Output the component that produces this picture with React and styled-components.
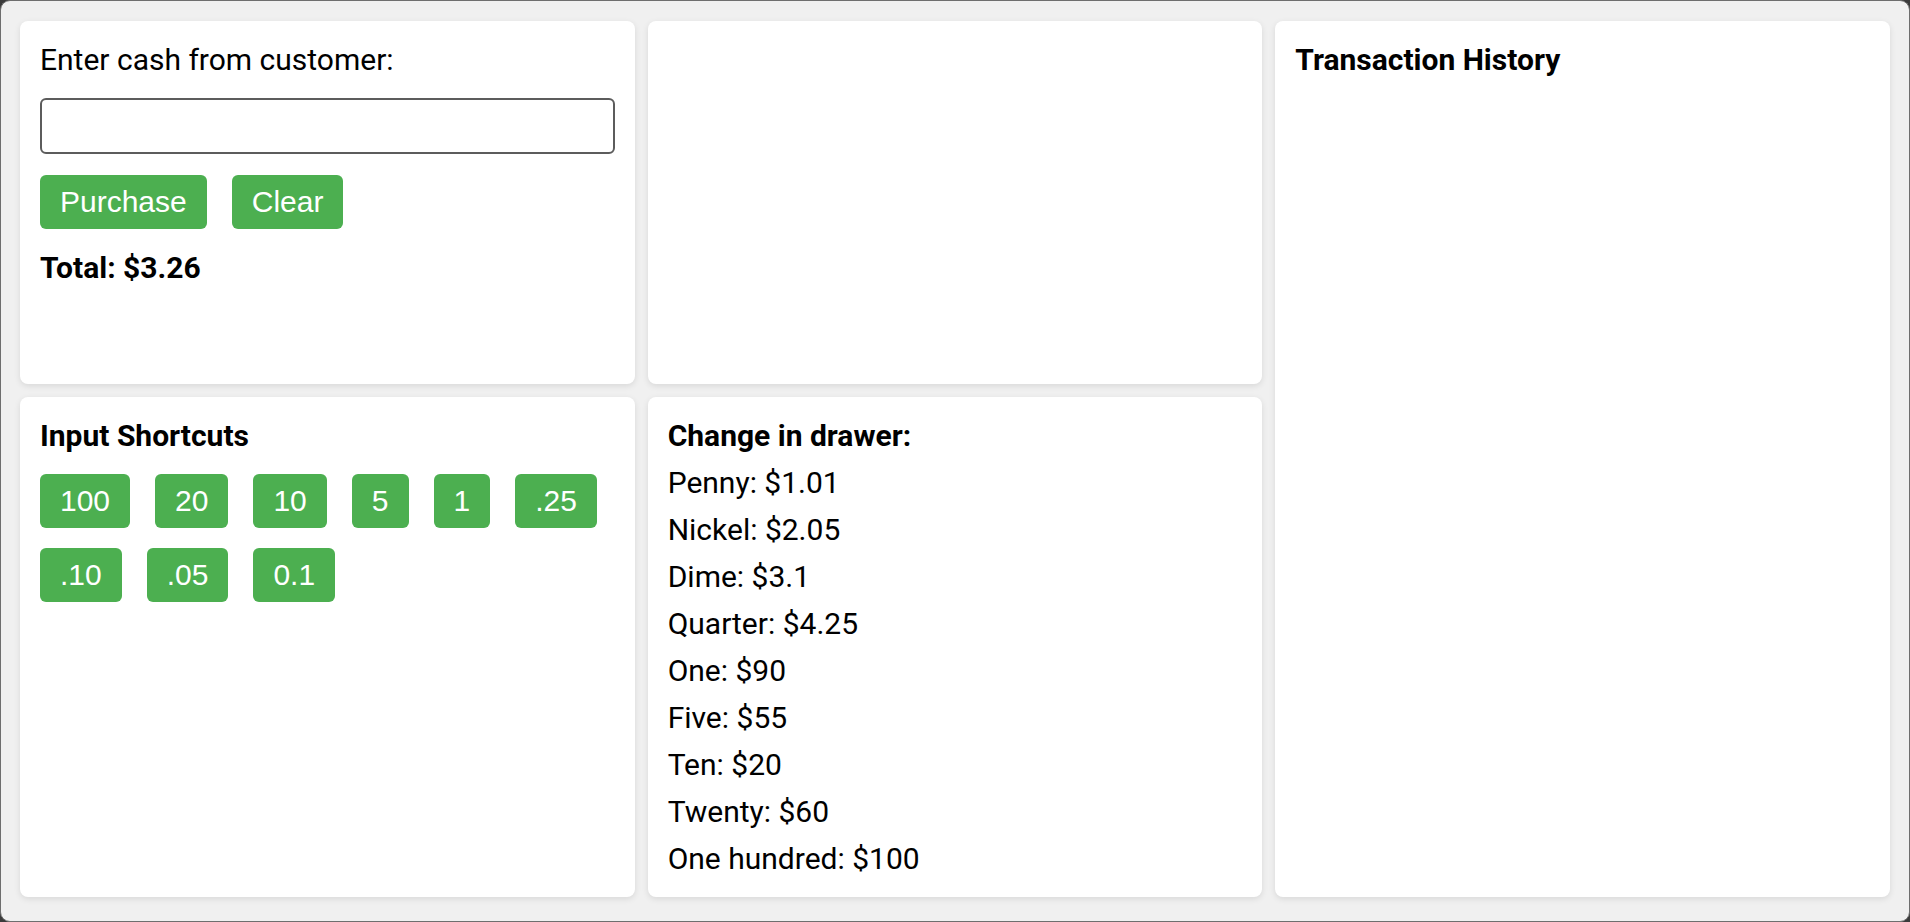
import React, { useState } from 'react'
import styled, { createGlobalStyle } from 'styled-components'

const GlobalStyle = createGlobalStyle`
  html, body {
    margin: 0;
    padding: 0;
    background: #3b3b3b;
  }
  body {
    font-family: Roboto, "Liberation Sans", sans-serif;
    color: #000;
  }
`

const Frame = styled.div`
  box-sizing: border-box;
  height: 100vh;
  background: #f0f0f0;
  border: 1px solid #6e6e6e;
  border-radius: 10px;
  padding: 20px 19px;
  display: grid;
  grid-template-columns: repeat(3, 1fr);
  grid-template-rows: 363px 500px;
  gap: 13px;
`

const Card = styled.section`
  background: #fff;
  border-radius: 8px;
  box-shadow: 0 2px 6px rgba(0, 0, 0, 0.1);
  padding: 15px 20px;
  grid-row: ${props => (props.$tall ? 'span 2' : 'auto')};
`

const Label = styled.label`
  display: block;
  font-size: 30px;
  line-height: 47px;
  margin-bottom: 15px;
`

const CashInput = styled.input`
  display: block;
  box-sizing: border-box;
  width: 100%;
  height: 56px;
  border: 2px solid #5c5c5c;
  border-radius: 6px;
  margin: 0 0 21px 0;
  font-size: 28px;
  padding: 0 10px;
`

const ButtonRow = styled.div`
  display: flex;
  flex-wrap: wrap;
  column-gap: 25px;
  row-gap: 20px;
  margin-bottom: 15px;
`

const GreenButton = styled.button`
  background: #4caf50;
  color: #fff;
  border: none;
  border-radius: 6px;
  padding: 10px 20px;
  font-family: "Liberation Sans", Arial, sans-serif;
  font-size: 30px;
  cursor: pointer;
`

const Heading = styled.h3`
  margin: 0 0 ${props => (props.$tight ? '0' : '15px')} 0;
  font-size: 30px;
  line-height: 47px;
  font-weight: 700;
`

const Total = styled.div`
  font-size: 30px;
  line-height: 47px;
  font-weight: 700;
`

const DrawerLine = styled.div`
  font-size: 30px;
  line-height: 47px;
`

const shortcuts = ['100', '20', '10', '5', '1', '.25', '.10', '.05', '0.1']

const drawer = [
  ['Penny', '1.01'],
  ['Nickel', '2.05'],
  ['Dime', '3.1'],
  ['Quarter', '4.25'],
  ['One', '90'],
  ['Five', '55'],
  ['Ten', '20'],
  ['Twenty', '60'],
  ['One hundred', '100'],
]

const App = () => {
  const [cash, setCash] = useState('')

  return (
    <>
      <GlobalStyle />
      <Frame>
        <Card>
          <Label htmlFor="cash">Enter cash from customer:</Label>
          <CashInput id="cash" value={cash} onChange={e => setCash(e.target.value)} />
          <ButtonRow>
            <GreenButton>Purchase</GreenButton>
            <GreenButton onClick={() => setCash('')}>Clear</GreenButton>
          </ButtonRow>
          <Total>Total: $3.26</Total>
        </Card>
        <Card />
        <Card $tall>
          <Heading>Transaction History</Heading>
        </Card>
        <Card>
          <Heading>Input Shortcuts</Heading>
          <ButtonRow>
            {shortcuts.map(value => (
              <GreenButton key={value} onClick={() => setCash(value)}>{value}</GreenButton>
            ))}
          </ButtonRow>
        </Card>
        <Card>
          <Heading $tight>Change in drawer:</Heading>
          {drawer.map(([name, amount]) => (
            <DrawerLine key={name}>{name}: ${amount}</DrawerLine>
          ))}
        </Card>
      </Frame>
    </>
  )
}

export default App
